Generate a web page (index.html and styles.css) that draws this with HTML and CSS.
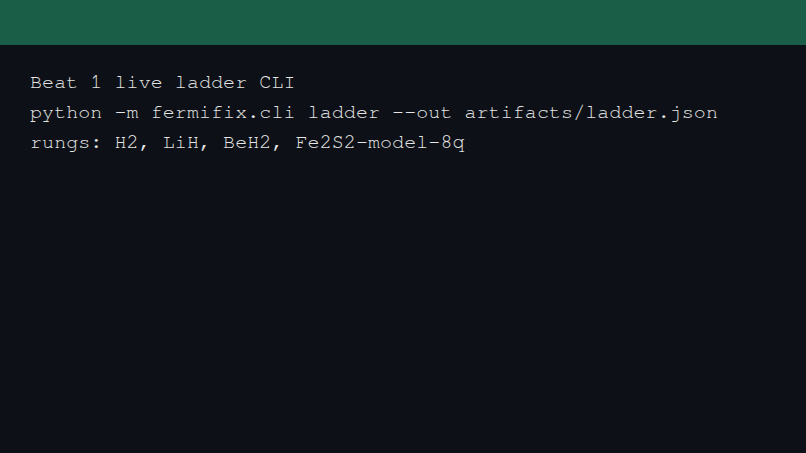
FILE: index.html
```html
<!DOCTYPE html>
<html>
<head>
<meta charset="utf-8">
<link rel="stylesheet" href="styles.css">
</head>
<body>
<header class="bar"></header>
<main class="content">
<div class="line">Beat 1 live ladder CLI</div>
<div class="line">python -m fermifix.cli ladder --out artifacts/ladder.json</div>
<div class="line">rungs: H2, LiH, BeH2, Fe2S2-model-8q</div>
</main>
</body>
</html>
```
FILE: styles.css
```css
html, body {
  margin: 0;
  padding: 0;
  height: 100%;
  background: #0d1117;
}
.bar {
  height: 45px;
  background: #1b5e48;
}
.content {
  padding: 22px 30px;
  font-family: "Nimbus Mono PS", "Nimbus Mono L", "FreeMono", "Courier New", Courier, monospace;
  font-size: 20px;
  letter-spacing: 0.07px;
  line-height: 30px;
  color: #e6e6e6;
}
.line {
  white-space: pre;
}
```
